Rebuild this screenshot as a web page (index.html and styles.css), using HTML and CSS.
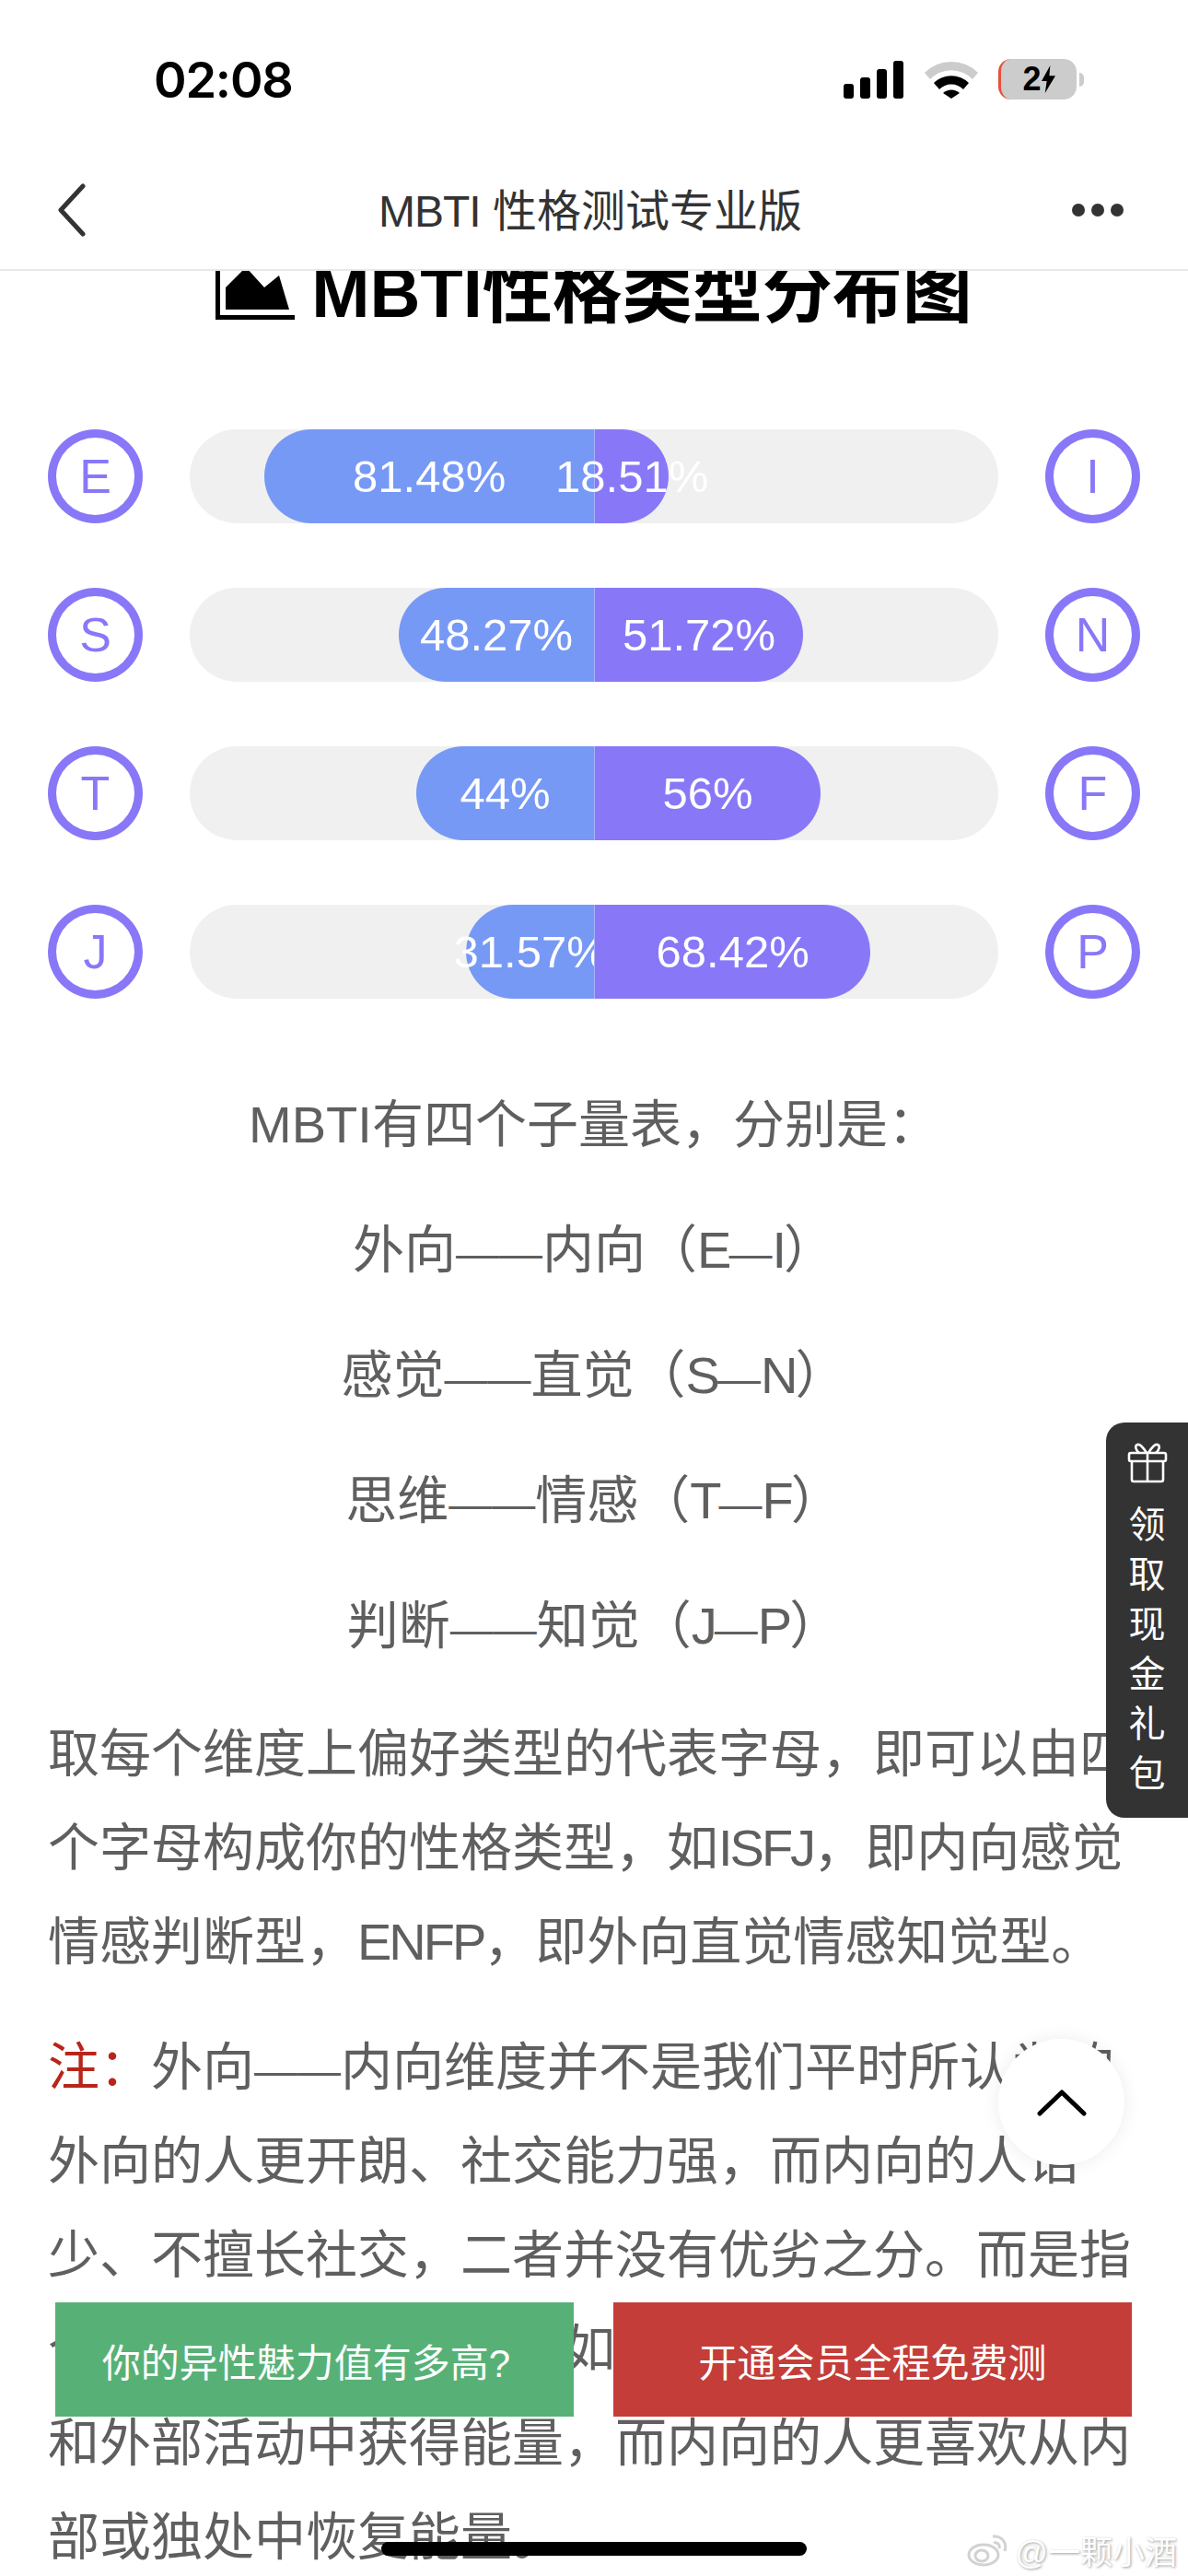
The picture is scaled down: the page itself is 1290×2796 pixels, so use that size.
FILE: index.html
```html
<!DOCTYPE html>
<html lang="zh-CN">

<head>
    <meta charset="UTF-8">
    <title>MBTI 性格测试专业版</title>
    <link rel="stylesheet" href="styles.css">
</head>

<body>
    <div class="status-bar">
        <span class="time">02:08</span>
        <div class="status-icons">
            <svg class="signal" viewBox="0 0 66 41" width="66" height="41">
                <rect x="0" y="25" width="11" height="16" rx="3" />
                <rect x="18" y="18" width="11" height="23" rx="3" />
                <rect x="36" y="9" width="11" height="32" rx="3" />
                <rect x="54" y="0" width="11" height="41" rx="3" />
            </svg>
            <svg class="wifi" viewBox="0 0 58 42" width="58" height="42">
                <path d="M0 14 A41 41 0 0 1 58 14 L52 21 A32 32 0 0 0 6 21 Z" fill="#ccc" />
                <path d="M10 25 A27 27 0 0 1 48 25 L42 32 A18 18 0 0 0 16 32 Z" />
                <path d="M20 36 A13 13 0 0 1 38 36 L29 42 Z" />
            </svg>
            <div class="battery">
                <span class="battery-num">2</span><svg class="bolt" viewBox="0 0 16 32" width="15" height="32"><path d="M10 0 L0 18 H6 L4 32 L16 12 H9 Z" /></svg>
            </div>
            <i class="battery-nub"></i>
        </div>
    </div>

    <nav class="nav">
        <svg class="nav-back" viewBox="0 0 32 58" width="32" height="58">
            <path d="M28 3 L4 29 L28 55" fill="none" stroke="#333" stroke-width="5" stroke-linecap="round" stroke-linejoin="round" />
        </svg>
        <h1 class="nav-title"><span class="nav-latin">MBTI</span> 性格测试专业版</h1>
        <div class="nav-more"><i></i><i></i><i></i></div>
    </nav>

    <main class="content">
        <h2 class="chart-title">
            <svg class="chart-icon" viewBox="0 0 86 72" width="86" height="72">
                <path d="M0 0 H5 V67 H86 V72 H0 Z" />
                <path d="M11 37 L33 15 L53 37 L69 24 L80 61 H11 Z" />
            </svg>
            MBTI性格类型分布图
        </h2>

        <div class="chart">
            <div class="chart-row">
                <span class="letter">E</span>
                <div class="track">
                    <div class="half half-left"><div class="fill fill-left" style="width: 81.48%"><span>81.48%</span></div></div>
                    <div class="half"><div class="fill fill-right" style="width: 18.51%"><span>18.51%</span></div></div>
                </div>
                <span class="letter">I</span>
            </div>
            <div class="chart-row">
                <span class="letter">S</span>
                <div class="track">
                    <div class="half half-left"><div class="fill fill-left" style="width: 48.27%"><span>48.27%</span></div></div>
                    <div class="half"><div class="fill fill-right" style="width: 51.72%"><span>51.72%</span></div></div>
                </div>
                <span class="letter">N</span>
            </div>
            <div class="chart-row">
                <span class="letter">T</span>
                <div class="track">
                    <div class="half half-left"><div class="fill fill-left" style="width: 44%"><span>44%</span></div></div>
                    <div class="half"><div class="fill fill-right" style="width: 56%"><span>56%</span></div></div>
                </div>
                <span class="letter">F</span>
            </div>
            <div class="chart-row">
                <span class="letter">J</span>
                <div class="track">
                    <div class="half half-left"><div class="fill fill-left" style="width: 31.57%"><span>31.57%</span></div></div>
                    <div class="half"><div class="fill fill-right" style="width: 68.42%"><span>68.42%</span></div></div>
                </div>
                <span class="letter">P</span>
            </div>
        </div>

        <div class="article">
            <p class="center">MBTI有四个子量表，分别是：</p>
            <p class="center">外向<span class="dash">——</span>内向（<span class="latin">E</span><span class="dash">—</span><span class="latin">I</span>）</p>
            <p class="center">感觉<span class="dash">——</span>直觉（<span class="latin">S</span><span class="dash">—</span><span class="latin">N</span>）</p>
            <p class="center">思维<span class="dash">——</span>情感（<span class="latin">T</span><span class="dash">—</span><span class="latin">F</span>）</p>
            <p class="center center-last">判断<span class="dash">——</span>知觉（<span class="latin">J</span><span class="dash">—</span><span class="latin">P</span>）</p>
            <p>取每个维度上偏好类型的代表字母，即可以由四个字母构成你的性格类型，如<span class="latin">ISFJ</span>，即内向感觉情感判断型，<span class="latin">ENFP</span>，即外向直觉情感知觉型。</p>
            <p><span class="note">注：</span>外向<span class="dash">——</span>内向维度并不是我们平时所认为的外向的人更开朗、社交能力强，而内向的人话少、不擅长社交，二者并没有优劣之分。而是指个人能量的来源不同，如外向的人更喜欢从社交和外部活动中获得能量，而内向的人更喜欢从内部或独处中恢复能量。</p>
        </div>
    </main>

    <aside class="gift">
        <svg viewBox="0 0 44 44" width="44" height="44" fill="none" stroke="#fff" stroke-width="2.6" stroke-linejoin="round">
            <rect x="2" y="11" width="40" height="9" rx="2" />
            <path d="M5 20 V40 A2 2 0 0 0 7 42 H37 A2 2 0 0 0 39 40 V20" />
            <path d="M22 11 V42" />
            <path d="M21 11 C18 6 14 1 11 2 C8 3 9 8 13 11" />
            <path d="M23 11 C26 6 30 1 33 2 C36 3 35 8 31 11" />
        </svg>
        <span>领</span><span>取</span><span>现</span><span>金</span><span>礼</span><span>包</span>
    </aside>

    <div class="back-top">
        <svg viewBox="0 0 54 30" width="54" height="30">
            <path d="M3 27 L27 4 L51 27" fill="none" stroke="#000" stroke-width="5" stroke-linecap="round" stroke-linejoin="round" />
        </svg>
    </div>

    <div class="bottom-btns">
        <a class="btn btn-green">你的异性魅力值有多高?</a>
        <a class="btn btn-red">开通会员全程免费测</a>
    </div>

    <div class="home-bar"></div>

    <div class="watermark">
        <svg viewBox="0 0 44 36" width="44" height="36" fill="none" stroke="#d2d2d2" stroke-width="3">
            <ellipse cx="18" cy="23" rx="16" ry="11" />
            <ellipse cx="16" cy="24" rx="7" ry="6" />
            <path d="M28 3 C37 2 44 9 41 19 M29 10 C33 9 36 12 35 16" />
        </svg>
        <span>@一颗小酒</span>
    </div>
</body>

</html>
```

FILE: styles.css
```css
* {
    box-sizing: border-box;
}

body {
    position: relative;
    width: 1290px;
    height: 2796px;
    margin: 0;
    overflow: hidden;
    background: #fff;
    font-family: "Liberation Sans", "Noto Sans CJK SC", sans-serif;
}

/* 状态栏 */
.status-bar {
    display: flex;
    justify-content: space-between;
    align-items: center;
    height: 172px;
    padding: 0 113px 0 167px;
}

.time {
    font-family: Inter, "Liberation Sans", sans-serif;
    font-size: 54px;
    font-weight: 600;
    letter-spacing: -1.2px;
    color: #000;
}

.status-icons {
    display: flex;
    align-items: center;
    gap: 22px;
}

.signal,
.wifi,
.bolt {
    fill: #000;
}

.battery {
    display: flex;
    justify-content: center;
    align-items: center;
    width: 85px;
    height: 44px;
    background: #ccc;
    border-left: 3px solid #e8503a;
    border-radius: 14px;
}

.battery-num {
    font-size: 36px;
    font-weight: 700;
    line-height: 1;
    color: #000;
}

.battery-nub {
    width: 5px;
    height: 15px;
    margin-left: -19px;
    background: #ccc;
    border-radius: 0 8px 8px 0;
}

/* 导航栏 */
.nav {
    display: grid;
    grid-template-columns: 1fr auto 1fr;
    align-items: center;
    height: 122px;
    padding: 0 70px 8px 62px;
    background: #fff;
    border-bottom: 2px solid #e8e8e8;
}

.nav-title {
    margin: 0 0 7px;
    font-size: 48px;
    font-weight: 400;
    color: #333;
}

.nav-latin {
    letter-spacing: -1px;
}

.nav-more {
    display: flex;
    justify-self: end;
    gap: 7px;
}

.nav-more i {
    width: 14px;
    height: 14px;
    background: #333;
    border-radius: 50%;
}

/* 内容 */
.content {
    height: 2502px;
    padding: 0 52px;
    overflow: hidden;
}

.chart-title {
    display: flex;
    justify-content: center;
    align-items: center;
    gap: 18px;
    height: 90px;
    margin: -28px 0 0;
    font-size: 76px;
    font-weight: 700;
    color: #000;
}

.chart {
    display: flex;
    flex-direction: column;
    gap: 70px;
    margin-top: 110px;
}

.chart-row {
    display: flex;
    justify-content: space-between;
    align-items: center;
    height: 102px;
}

.letter {
    display: flex;
    justify-content: center;
    align-items: center;
    width: 103px;
    height: 102px;
    border: 9px solid #8878f8;
    border-radius: 50%;
    font-size: 52px;
    color: #8878f8;
}

.track {
    display: flex;
    width: 878px;
    height: 102px;
    background: #f0f0f0;
    border-radius: 51px;
}

.half {
    display: flex;
    flex: 1;
}

.half-left {
    justify-content: flex-end;
}

.fill {
    display: flex;
    justify-content: center;
    align-items: center;
    height: 100%;
    font-size: 49px;
    color: #fff;
    white-space: nowrap;
}

.fill-left {
    background: #7799f6;
    border-radius: 51px 0 0 51px;
}

.fill-right {
    position: relative;
    background: #8878f8;
    border-left: 1px solid #a9b4f8;
    border-radius: 0 51px 51px 0;
}

.article {
    margin-top: 86px;
}

.article p {
    margin: 0 0 34px;
    font-size: 56px;
    line-height: 102px;
    color: #5f5f5f;
}

.article .center {
    text-align: center;
}

.article .center-last {
    margin-bottom: 37px;
}

/* 破折号比汉字窄 */
.dash {
    font-size: 47px;
    line-height: 0;
}

.latin {
    letter-spacing: -3px;
}

.note {
    color: #b8251b;
}

/* 右侧悬浮 */
.gift {
    position: absolute;
    top: 1544px;
    right: 0;
    display: flex;
    flex-direction: column;
    align-items: center;
    width: 89px;
    height: 429px;
    padding-top: 22px;
    background: #333;
    border-radius: 20px 0 0 20px;
    font-size: 40px;
    line-height: 54px;
    color: #fff;
}

.gift svg {
    margin-bottom: 18px;
}

.back-top {
    position: absolute;
    top: 2213px;
    left: 1084px;
    display: flex;
    justify-content: center;
    align-items: center;
    width: 137px;
    height: 137px;
    background: #fff;
    border-radius: 50%;
    box-shadow: 0 0 20px rgba(0, 0, 0, 0.08);
}

/* 底部按钮 */
.bottom-btns {
    position: absolute;
    top: 2499px;
    left: 60px;
    display: flex;
    gap: 43px;
}

.btn {
    display: flex;
    justify-content: center;
    align-items: center;
    width: 563px;
    height: 124px;
    font-size: 42px;
    color: #fff;
}

.btn-green {
    padding-right: 18px;
    background: #57b176;
}

.btn-red {
    background: #c43d38;
}

.home-bar {
    position: absolute;
    top: 2759px;
    left: 414px;
    width: 462px;
    height: 15px;
    background: #000;
    border-radius: 8px;
}

.watermark {
    position: absolute;
    top: 2742px;
    right: 12px;
    display: flex;
    align-items: center;
    gap: 8px;
    font-size: 35px;
    color: #fff;
    text-shadow: 1px 1px 3px #999;
}
```
